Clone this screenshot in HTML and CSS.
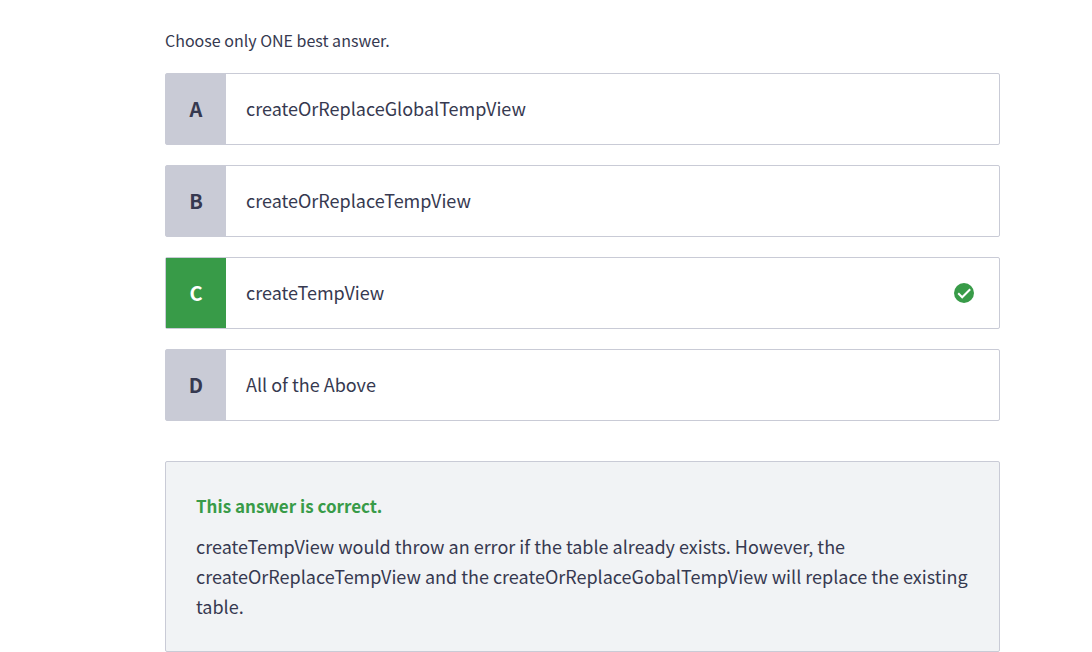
FILE: index.html
```html
<!DOCTYPE html>
<html lang="en">
<head>
<meta charset="utf-8">
<meta name="viewport" content="width=device-width, initial-scale=1">
<title>Quiz question</title>
<link rel="stylesheet" href="styles.css">
</head>
<body>
<main class="quiz">
  <fieldset class="question">
    <legend class="hint">Choose only ONE best answer.</legend>
    <div class="options">
      <label class="option">
        <input class="choice" type="radio" name="answer" value="A">
        <span class="letter">A</span>
        <span class="text">createOrReplaceGlobalTempView</span>
      </label>
      <label class="option">
        <input class="choice" type="radio" name="answer" value="B">
        <span class="letter">B</span>
        <span class="text">createOrReplaceTempView</span>
      </label>
      <label class="option">
        <input class="choice" type="radio" name="answer" value="C" checked>
        <span class="letter">C</span>
        <span class="text">createTempView</span>
        <svg class="check" viewBox="0 0 20 20" aria-hidden="true">
          <circle cx="10" cy="10" r="10" fill="#389b48"/>
          <path d="M4.2 10.3l4 4 8-8" fill="none" stroke="#fff" stroke-width="2"/>
        </svg>
      </label>
      <label class="option">
        <input class="choice" type="radio" name="answer" value="D">
        <span class="letter">D</span>
        <span class="text">All of the Above</span>
      </label>
    </div>
  </fieldset>
  <section class="feedback">
    <h2 class="verdict">This answer is correct.</h2>
    <p class="explanation">createTempView would throw an error if the table already exists. However, the createOrReplaceTempView and the createOrReplaceGobalTempView will replace the existing table.</p>
  </section>
</main>
</body>
</html>
```

FILE: styles.css
```css
* {
  box-sizing: border-box;
}

body {
  margin: 0;
  background: #fff;
  color: #363950;
  font-family: "Source Sans Pro", "Noto Sans CJK SC", sans-serif;
  font-size: 18px;
  line-height: 30px;
}

.quiz {
  padding: 25px 92px 0 165px;
}

.question {
  min-width: 0;
  margin: 0;
  padding: 0;
  border: 0;
}

.hint {
  padding: 0;
  margin-bottom: 18px;
  font-size: 16px;
}

.options {
  display: flex;
  flex-direction: column;
  gap: 20px;
}

.option {
  position: relative;
  display: flex;
  align-items: center;
  min-height: 72px;
  border: 1px solid #c9cbd6;
  border-radius: 2px;
  cursor: pointer;
}

.choice {
  position: absolute;
  inset: 0;
  width: 100%;
  height: 100%;
  margin: 0;
  opacity: 0;
  cursor: pointer;
}

.letter {
  display: flex;
  flex: 0 0 60px;
  align-items: center;
  justify-content: center;
  align-self: stretch;
  background: #c9cbd6;
  font-size: 20px;
  font-weight: 600;
}

.choice:checked + .letter {
  background: #389b48;
  color: #fff;
}

.text {
  flex: 1;
  padding: 0 20px 2px;
}

.check {
  width: 20px;
  height: 20px;
  margin-right: 25px;
}

.feedback {
  margin-top: 40px;
  padding: 29px 30px 30px;
  border: 1px solid #c9cbd6;
  border-radius: 2px;
  background: #f1f3f5;
}

.verdict {
  margin: 0 0 10px;
  color: #389b48;
  font-size: 17px;
  font-weight: 600;
}

.explanation {
  margin: 0;
}
```
